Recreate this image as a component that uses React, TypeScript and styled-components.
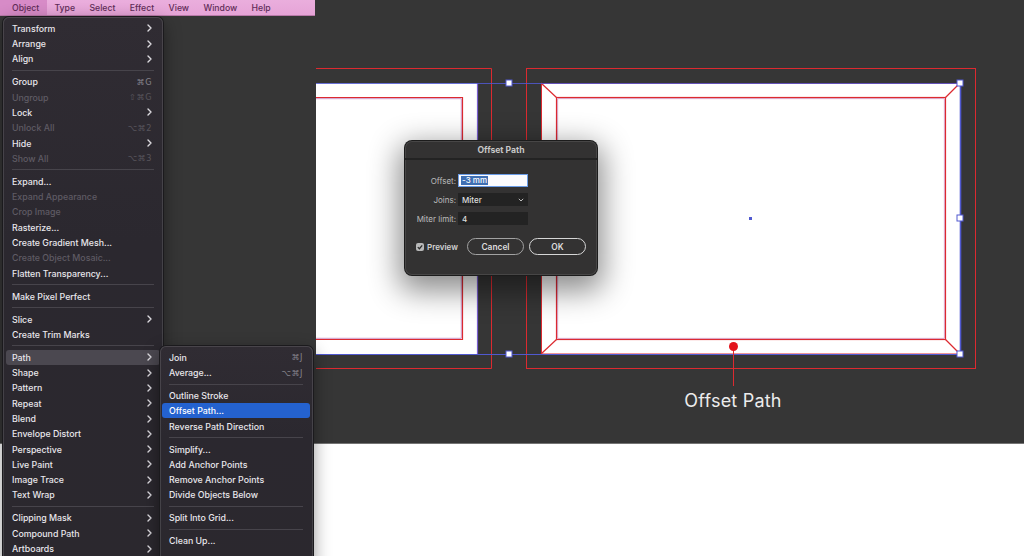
import React from 'react'
import styled, { createGlobalStyle, css } from 'styled-components'

const UI_FONT = `Inter, "Noto Sans", "DejaVu Sans", sans-serif`
const RED = '#dc2a30'
const BLUE = '#5059d0'

const GlobalStyle = createGlobalStyle`
  html, body {
    margin: 0;
    padding: 0;
    background: #ffffff;
  }
  body {
    font-family: ${UI_FONT};
    -webkit-font-smoothing: antialiased;
  }
`

type Entry = {
  label?: string
  shortcut?: string
  sub?: boolean
  disabled?: boolean
  state?: 'open' | 'selected'
  sep?: boolean
}

const SEP: Entry = { sep: true }

const objectMenu: Entry[] = [
  { label: 'Transform', sub: true },
  { label: 'Arrange', sub: true },
  { label: 'Align', sub: true },
  SEP,
  { label: 'Group', shortcut: '⌘G' },
  { label: 'Ungroup', shortcut: '⇧⌘G', disabled: true },
  { label: 'Lock', sub: true },
  { label: 'Unlock All', shortcut: '⌥⌘2', disabled: true },
  { label: 'Hide', sub: true },
  { label: 'Show All', shortcut: '⌥⌘3', disabled: true },
  SEP,
  { label: 'Expand...' },
  { label: 'Expand Appearance', disabled: true },
  { label: 'Crop Image', disabled: true },
  { label: 'Rasterize...' },
  { label: 'Create Gradient Mesh...' },
  { label: 'Create Object Mosaic...', disabled: true },
  { label: 'Flatten Transparency...' },
  SEP,
  { label: 'Make Pixel Perfect' },
  SEP,
  { label: 'Slice', sub: true },
  { label: 'Create Trim Marks' },
  SEP,
  { label: 'Path', sub: true, state: 'open' },
  { label: 'Shape', sub: true },
  { label: 'Pattern', sub: true },
  { label: 'Repeat', sub: true },
  { label: 'Blend', sub: true },
  { label: 'Envelope Distort', sub: true },
  { label: 'Perspective', sub: true },
  { label: 'Live Paint', sub: true },
  { label: 'Image Trace', sub: true },
  { label: 'Text Wrap', sub: true },
  SEP,
  { label: 'Clipping Mask', sub: true },
  { label: 'Compound Path', sub: true },
  { label: 'Artboards', sub: true },
]

const pathMenu: Entry[] = [
  { label: 'Join', shortcut: '⌘J' },
  { label: 'Average...', shortcut: '⌥⌘J' },
  SEP,
  { label: 'Outline Stroke' },
  { label: 'Offset Path...', state: 'selected' },
  { label: 'Reverse Path Direction' },
  SEP,
  { label: 'Simplify...' },
  { label: 'Add Anchor Points' },
  { label: 'Remove Anchor Points' },
  { label: 'Divide Objects Below' },
  SEP,
  { label: 'Split Into Grid...' },
  SEP,
  { label: 'Clean Up...' },
]

const menuBarItems = ['Object', 'Type', 'Select', 'Effect', 'View', 'Window', 'Help']

export default function App() {
  return (
    <>
      <GlobalStyle />
      <Page>
        <CanvasArea>
          <Artwork />
        </CanvasArea>
        <PasteArea />

        <MenuBar>
          {menuBarItems.map((name, i) => (
            <MenuBarItem key={name} $active={i === 0}>
              {name}
            </MenuBarItem>
          ))}
        </MenuBar>

        <MainMenu>
          <MenuList entries={objectMenu} />
        </MainMenu>

        <SubMenu>
          <MenuList entries={pathMenu} />
        </SubMenu>

        <OffsetDialog />
      </Page>
    </>
  )
}

const MenuList = ({ entries }: { entries: Entry[] }) => (
  <>
    {entries.map((e, i) =>
      e.sep ? (
        <Separator key={i} />
      ) : (
        <MenuRow key={i} $disabled={e.disabled} $state={e.state}>
          <span>{e.label}</span>
          {e.shortcut && <Shortcut $disabled={e.disabled}>{e.shortcut}</Shortcut>}
          {e.sub && <Chevron />}
        </MenuRow>
      ),
    )}
  </>
)

const Chevron = () => (
  <svg width="5" height="8" viewBox="0 0 5 8">
    <path d="M1 1l3 3-3 3" fill="none" stroke="#dcdadf" strokeWidth="1.4" strokeLinecap="round" strokeLinejoin="round" />
  </svg>
)

const Handle = ({ x, y }: { x: number; y: number }) => (
  <rect x={x - 3} y={y - 3} width="6" height="6" fill="#ffffff" stroke={BLUE} strokeWidth="1" />
)

const Artwork = () => (
  <svg width="1024" height="444" viewBox="0 0 1024 444">
    {/* left artboard, cut off by the menus */}
    <polyline points="316,68.5 491.5,68.5 491.5,368.5 316,368.5" fill="none" stroke={RED} />
    <rect x="316" y="83" width="161" height="271" fill="#ffffff" />
    <polyline points="316,97.5 462.5,97.5 462.5,339.5 316,339.5" fill="none" stroke={RED} strokeWidth="1.2" />
    <polyline points="316,98.7 461.3,98.7 461.3,338.3 316,338.3" fill="none" stroke="#c07ab8" strokeWidth="0.8" />
    <line x1="477.5" y1="83" x2="477.5" y2="354" stroke="#7a5fd0" strokeWidth="1.2" />

    {/* right artboard */}
    <rect x="526.5" y="68.5" width="449" height="300" fill="none" stroke={RED} />
    <rect x="541" y="83" width="419" height="271" fill="#ffffff" />
    <polyline points="960,83.5 541.5,83.5 541.5,354 960,354" fill="none" stroke={RED} strokeWidth="1" />
    <rect x="556.5" y="97.5" width="389" height="242" fill="none" stroke={RED} strokeWidth="1.2" />
    <rect x="557.7" y="98.7" width="386.6" height="239.6" fill="none" stroke="#d08ab8" strokeWidth="0.8" />
    <line x1="541" y1="83" x2="556.5" y2="97.5" stroke={RED} strokeWidth="1.2" />
    <line x1="960" y1="83" x2="945.5" y2="97.5" stroke={RED} strokeWidth="1.2" />
    <line x1="541" y1="354" x2="556.5" y2="339.5" stroke={RED} strokeWidth="1.2" />
    <line x1="960" y1="354" x2="945.5" y2="339.5" stroke={RED} strokeWidth="1.2" />

    {/* selection */}
    <line x1="316" y1="83.5" x2="960" y2="83.5" stroke={BLUE} strokeWidth="1" opacity="0.85" />
    <line x1="316" y1="354.5" x2="960" y2="354.5" stroke={BLUE} strokeWidth="1" />
    <line x1="960.5" y1="83" x2="960.5" y2="354" stroke={BLUE} strokeWidth="1.6" />
    <Handle x={509} y={83} />
    <Handle x={509} y={354} />
    <Handle x={960} y={83} />
    <Handle x={960} y={218} />
    <Handle x={960} y={354} />
    <rect x="749" y="217" width="3" height="3" fill={BLUE} />

    {/* callout */}
    <line x1="733.5" y1="348" x2="733.5" y2="386" stroke={RED} strokeWidth="1" />
    <circle cx="733.5" cy="346.5" r="4.5" fill="#e3141c" />
    <text
      x="733"
      y="407"
      textAnchor="middle"
      fontFamily={UI_FONT}
      fontSize="18"
      fontWeight="400"
      fill="#ececec"
      letterSpacing="0.2"
    >
      Offset Path
    </text>
  </svg>
)

const OffsetDialog = () => (
  <Dialog>
    <DialogTitle>Offset Path</DialogTitle>
    <Form>
      <FieldLabel>Offset:</FieldLabel>
      <TextField $focused>
        <Selection>-3 mm</Selection>
      </TextField>
      <FieldLabel>Joins:</FieldLabel>
      <TextField>
        Miter
        <svg width="6" height="4" viewBox="0 0 6 4" style={{ marginLeft: 'auto' }}>
          <path d="M0.8 0.8l2.2 2.2 2.2-2.2" fill="none" stroke="#bdbdbd" strokeWidth="1" />
        </svg>
      </TextField>
      <FieldLabel>Miter limit:</FieldLabel>
      <TextField>4</TextField>
    </Form>
    <Footer>
      <CheckLabel>
        <CheckBox>
          <svg width="8" height="8" viewBox="0 0 8 8">
            <path d="M1.8 4.1l1.6 1.6 2.8-3.4" fill="none" stroke="#2b2b2b" strokeWidth="1.3" />
          </svg>
        </CheckBox>
        Preview
      </CheckLabel>
      <PillButton>Cancel</PillButton>
      <PillButton $primary>OK</PillButton>
    </Footer>
  </Dialog>
)

const Page = styled.div`
  position: relative;
  width: 1024px;
  height: 556px;
  overflow: hidden;
  display: flex;
  flex-direction: column;
`

const CanvasArea = styled.div`
  height: 444px;
  flex: none;
  background: #363636;
  border-bottom: 1px solid #747474;
  box-sizing: border-box;

  svg {
    display: block;
  }
`

const PasteArea = styled.div`
  flex: 1;
  background: #ffffff;
`

const MenuBar = styled.nav`
  position: absolute;
  top: 0;
  left: 0;
  width: 315px;
  height: 16px;
  display: flex;
  align-items: center;
  background: linear-gradient(#eaaedd, #e6a4d7);
  border-bottom: 1px solid #b97aa9;
  box-sizing: border-box;
`

const MenuBarItem = styled.span<{ $active?: boolean }>`
  height: 100%;
  display: flex;
  align-items: center;
  padding: 0 7.2px;
  font-size: 8.7px;
  font-weight: 500;
  color: #612c58;
  ${(p) =>
    p.$active &&
    css`
      padding: 0 8px 0 12px;
      background: #d78bc7;
    `}
`

const menuSurface = css`
  position: absolute;
  box-sizing: border-box;
  background: linear-gradient(#302c33, #2b282f 40%, #2b282e);
  border-radius: 6px;
  box-shadow: 0 0 0 1px #1b1a1d, inset 0 0 0 1px rgba(255, 255, 255, 0.12), 0 6px 18px rgba(0, 0, 0, 0.45);
`

const MainMenu = styled.div`
  ${menuSurface};
  top: 17px;
  left: 3px;
  width: 160px;
  height: 560px;
  padding: 3.6px 3px;
`

const SubMenu = styled.div`
  ${menuSurface};
  top: 346px;
  left: 160px;
  width: 153px;
  height: 230px;
  padding: 3.6px 3px 0 2px;

  & > div {
    padding: 0 7px;
  }
`

const MenuRow = styled.div<{ $disabled?: boolean; $state?: 'open' | 'selected' }>`
  height: 15.3px;
  display: flex;
  align-items: center;
  gap: 4px;
  padding: 0 8px 0 6px;
  border-radius: 3px;
  font-size: 8.8px;
  font-weight: 500;
  white-space: nowrap;
  color: ${(p) => (p.$disabled ? '#5f5b64' : '#e9e7ec')};

  & > span {
    flex: 1;
  }

  ${(p) =>
    p.$state === 'open' &&
    css`
      background: #4b4850;
    `}
  ${(p) =>
    p.$state === 'selected' &&
    css`
      background: #2462cf;
      color: #ffffff;
    `}
`

const Shortcut = styled.em<{ $disabled?: boolean }>`
  font-style: normal;
  font-family: "DejaVu Sans", ${UI_FONT};
  font-size: 8.2px;
  font-weight: 400;
  letter-spacing: 0.5px;
  color: ${(p) => (p.$disabled ? '#57545b' : '#85828a')};
`

const Separator = styled.div`
  height: 7.7px;
  display: flex;
  align-items: center;
  padding: 0 6px;

  &::before {
    content: '';
    flex: 1;
    height: 1px;
    background: #47444b;
  }
`

const Dialog = styled.section`
  position: absolute;
  top: 141px;
  left: 405px;
  width: 192px;
  height: 134px;
  box-sizing: border-box;
  background: #333232;
  border-radius: 7px;
  box-shadow: 0 0 0 1px #1c1c1c, inset 0 0 0 1px rgba(255, 255, 255, 0.1), 0 10px 30px 6px rgba(0, 0, 0, 0.45);
  overflow: hidden;
`

const DialogTitle = styled.header`
  height: 19px;
  display: flex;
  align-items: center;
  justify-content: center;
  border-bottom: 2px solid #232323;
  box-sizing: border-box;
  font-size: 8.6px;
  font-weight: 700;
  color: #c7c7c7;
`

const Form = styled.div`
  display: grid;
  grid-template-columns: 51px 70px;
  grid-auto-rows: 13px;
  column-gap: 2px;
  row-gap: 6px;
  padding-top: 14px;
  align-items: center;
`

const FieldLabel = styled.label`
  text-align: right;
  font-size: 8px;
  color: #bdbdbd;
  white-space: nowrap;
`

const TextField = styled.div<{ $focused?: boolean }>`
  height: 13px;
  box-sizing: border-box;
  display: flex;
  align-items: center;
  padding: 0 4px;
  background: #232323;
  font-size: 8px;
  font-weight: 500;
  color: #dedede;
  ${(p) =>
    p.$focused &&
    css`
      padding: 0 2px;
      background: #fbfbfd;
      border: 1.5px solid #6a9ce6;
    `}
`

const Selection = styled.span`
  background: #3f6fb3;
  color: #ffffff;
  padding: 0 1px;
  line-height: 9px;
`

const Footer = styled.div`
  display: flex;
  align-items: center;
  gap: 5px;
  margin-top: 13px;
  padding: 0 11px;
`

const CheckLabel = styled.label`
  flex: 1;
  display: flex;
  align-items: center;
  gap: 3px;
  font-size: 8px;
  font-weight: 600;
  color: #d2d2d2;
`

const CheckBox = styled.span`
  width: 8px;
  height: 8px;
  border-radius: 2px;
  background: #b8b8b8;
  display: flex;
`

const PillButton = styled.button<{ $primary?: boolean }>`
  width: 57px;
  height: 17px;
  box-sizing: border-box;
  border-radius: 9px;
  border: 1px solid ${(p) => (p.$primary ? '#d6d6d6' : '#a2a2a2')};
  background: transparent;
  font-family: ${UI_FONT};
  font-size: 8.4px;
  font-weight: 600;
  color: #dcdcdc;
  padding: 0;
`
